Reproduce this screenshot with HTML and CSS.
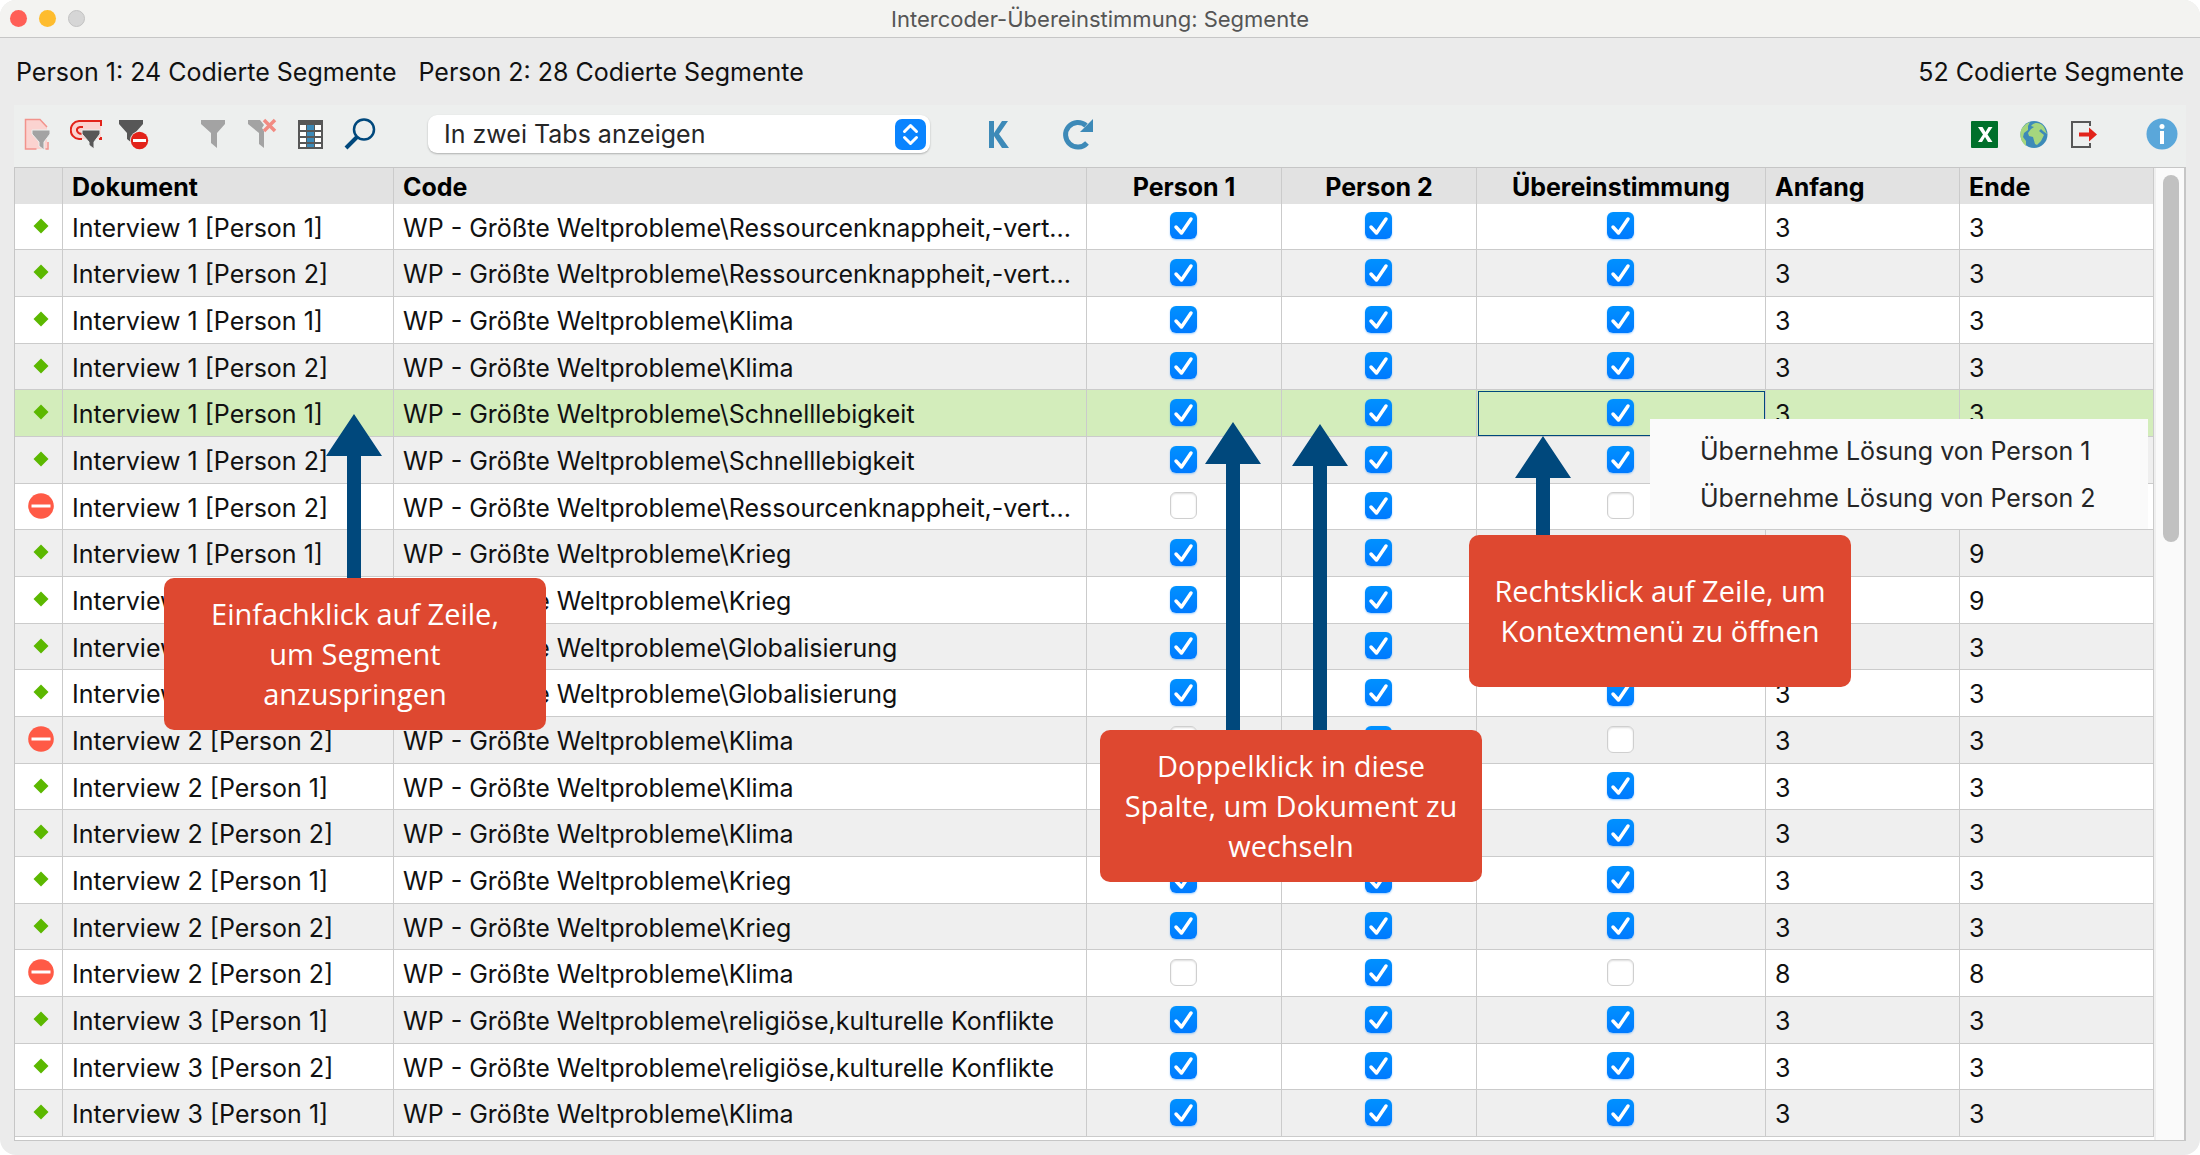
FILE: index.html
```html
<!DOCTYPE html>
<html lang="de">
<head>
<meta charset="utf-8">
<title>Intercoder-Übereinstimmung: Segmente</title>
<link rel="stylesheet" href="styles.css">
</head>
<body>
<svg class="defs" aria-hidden="true">
  <symbol id="ok" viewBox="0 0 28 28"><path d="M14 6.500l7.500 7.500l-7.500 7.500l-7.500-7.500z" fill="#5cb800"/></symbol>
  <symbol id="no" viewBox="0 0 28 28"><circle cx="14" cy="14" r="12.800" fill="#ff5a46"/><path d="M4.500 12.500h19v3h-19z" fill="#fff"/></symbol>
</svg>
<main class="window">
  <header class="titlebar">
    <div class="lights"><button class="light close" aria-label="Schließen"></button><button class="light minimize" aria-label="Minimieren"></button><button class="light zoom" aria-label="Zoomen" disabled></button></div>
    <h1>Intercoder-Übereinstimmung: Segmente</h1>
  </header>
  <div class="summary">
    <span>Person 1: 24 Codierte Segmente</span>
    <span>Person 2: 28 Codierte Segmente</span>
    <span class="total">52 Codierte Segmente</span>
  </div>
  <div class="panel">
    <div class="toolbar">
      <div class="group sources">
        <button aria-label="Dokumente filtern"><svg viewBox="0 0 32 32"><path d="M3.500 1.500h14.500l7 7.500v22h-21.500z" fill="#fbd3d0"/><path d="M25 9l-7-7.500h-14.500v29.500h11M23.500 31h2.500v-7" fill="none" stroke="#f2938c" stroke-width="1.500"/><path d="M10 12h18v4l-6 8v8l-5-4v-4l-7-8z" fill="#a3a3a3" stroke="#edefee"/></svg></button>
        <button aria-label="Codes filtern"><svg viewBox="0 0 32 32"><path d="M31 3H9C-2 4-2 20 9 21h22z" fill="#fbd3d0"/><path d="M31 8V3H9C-2 4-2 20 9 21h3M31 19v2h-2M13 15c-5 3-9-5-3-6h3" fill="none" stroke="#e2231a" stroke-width="2"/><path d="M12 12h18v4l-6 8v7l-5-4v-3l-7-8z" fill="#575757" stroke="#edefee"/></svg></button>
        <button aria-label="Nicht-Übereinstimmungen"><svg viewBox="0 0 32 32"><path d="M1 2h24v4l-8 9-3 5v5l-5-4v-6l-8-9z" fill="#575757"/><circle cx="21.500" cy="22.500" r="9.500" fill="#edefee"/><circle cx="21.500" cy="22.500" r="8.700" fill="#e2231a"/><path d="M15 21h13v3h-13z" fill="#fff"/></svg></button>
      </div>
      <div class="group filters">
        <button aria-label="Filter"><svg viewBox="0 0 32 32"><path d="M4 2h24v4l-8 9v15l-6-5v-10l-10-9z" fill="#a3a3a3"/></svg></button>
        <button aria-label="Filter zurücksetzen"><svg viewBox="0 0 32 32"><path d="M2 2h12l4 5-2 3 2 3v17l-5-4v-11l-11-9z" fill="#a3a3a3"/><path d="M18 2l11 11M29 2l-11 11" stroke="#f28b82" stroke-width="3.500"/></svg></button>
        <button aria-label="Spalten auswählen"><svg viewBox="0 0 32 32"><path d="M3 2h25v29h-25z" fill="#575757"/><path d="M5 7h6v5h-6zM5 14h6v4h-6zM5 20h6v4h-6zM5 26h6v3h-6zM20 7h6v5h-6zM20 14h6v4h-6zM20 20h6v4h-6zM20 26h6v3h-6z" fill="#fff"/><path d="M12 7h7v5h-7zM12 14h7v4h-7zM12 20h7v4h-7zM12 26h7v3h-7z" fill="#3d8ab8"/></svg></button>
        <button aria-label="Suchen"><svg viewBox="0 0 32 32"><circle cx="20" cy="11.500" r="10" fill="none" stroke="#00487c" stroke-width="2.500"/><path d="M13 19l-11 11" stroke="#00487c" stroke-width="4"/></svg></button>
      </div>
      <label class="picker"><select aria-label="Anzeige"><option>In zwei Tabs anzeigen</option></select><svg viewBox="0 0 31 31" aria-hidden="true"><rect width="31" height="31" rx="7" fill="#0a84ff"/><path d="M9.500 12.500l6-6 6 6M9.500 18.500l6 6 6-6" fill="none" stroke="#fff" stroke-width="3" stroke-linecap="round" stroke-linejoin="round"/></svg></label>
      <div class="group spaced">
        <button aria-label="Kappa"><svg viewBox="0 0 32 32"><path d="M7 3h5v12l8-12h6l-9 13 10 14h-7l-8-12v12h-5z" fill="#3d8ab8"/></svg></button>
        <button aria-label="Aktualisieren"><svg viewBox="0 0 32 32"><path d="M24 7.500A12.300 12.300 0 1 0 25 25" fill="none" stroke="#3d8ab8" stroke-width="5"/><path d="M31 1v13h-13z" fill="#3d8ab8"/></svg></button>
      </div>
      <div class="group export">
        <button aria-label="Excel-Export"><svg viewBox="0 0 32 32"><rect x="2" y="3" width="27" height="27" rx="1" fill="#00702b"/><path d="M9 9h4.500l3 5 3-5h4l-5 7.500 5 7.500h-4.500l-3-5-3 5h-4l5-7.500z" fill="#fff"/></svg></button>
        <button aria-label="HTML-Export"><svg viewBox="0 0 32 32"><circle cx="16" cy="16.500" r="13.500" fill="#3d8ab8"/><path d="M4 10l4-4 4-2-2 4 0 4-4 3-1 4 3 4v5c-6-5-7-12-4-18zM13 8c4-5 10-3 13 1l3 7-4-3-2-2-2 2 5 4-3 6-4 4-2-1-2-7-4-1-1-3 3-4 3-2z" fill="#a5d67e"/></svg></button>
        <button aria-label="Exportieren"><svg viewBox="0 0 32 32"><path d="M23 8V4H5v25h18v-4" fill="none" stroke="#575757" stroke-width="2"/><path d="M12 14.500h10v-5l8 7-8 7v-5h-10z" fill="#e2231a"/></svg></button>
      </div>
      <div class="group">
        <button aria-label="Info"><svg viewBox="0 0 32 32"><circle cx="16" cy="16" r="15.500" fill="#5aa7da"/><circle cx="16" cy="8.500" r="2.500" fill="#fff"/><path d="M14 13h4v13h-4z" fill="#fff"/></svg></button>
      </div>
    </div>
    <div class="grid">
      <div class="rows">
        <table>
          <colgroup><col class="c-status"><col class="c-doc"><col><col class="c-person"><col class="c-person"><col class="c-match"><col class="c-num"><col class="c-num"></colgroup>
          <thead><tr><th></th><th>Dokument</th><th>Code</th><th class="mid">Person 1</th><th class="mid">Person 2</th><th class="mid">Übereinstimmung</th><th>Anfang</th><th>Ende</th></tr></thead>
          <tbody>
            <tr><td><svg><use href="#ok"/></svg></td><td>Interview 1 [Person 1]</td><td>WP - Größte Weltprobleme\Ressourcenknappheit,-vert...</td><td class="check"><input type="checkbox" aria-label="Person 1" checked></td><td class="check"><input type="checkbox" aria-label="Person 2" checked></td><td class="check"><input type="checkbox" aria-label="Übereinstimmung" checked></td><td>3</td><td>3</td></tr>
            <tr><td><svg><use href="#ok"/></svg></td><td>Interview 1 [Person 2]</td><td>WP - Größte Weltprobleme\Ressourcenknappheit,-vert...</td><td class="check"><input type="checkbox" aria-label="Person 1" checked></td><td class="check"><input type="checkbox" aria-label="Person 2" checked></td><td class="check"><input type="checkbox" aria-label="Übereinstimmung" checked></td><td>3</td><td>3</td></tr>
            <tr><td><svg><use href="#ok"/></svg></td><td>Interview 1 [Person 1]</td><td>WP - Größte Weltprobleme\Klima</td><td class="check"><input type="checkbox" aria-label="Person 1" checked></td><td class="check"><input type="checkbox" aria-label="Person 2" checked></td><td class="check"><input type="checkbox" aria-label="Übereinstimmung" checked></td><td>3</td><td>3</td></tr>
            <tr><td><svg><use href="#ok"/></svg></td><td>Interview 1 [Person 2]</td><td>WP - Größte Weltprobleme\Klima</td><td class="check"><input type="checkbox" aria-label="Person 1" checked></td><td class="check"><input type="checkbox" aria-label="Person 2" checked></td><td class="check"><input type="checkbox" aria-label="Übereinstimmung" checked></td><td>3</td><td>3</td></tr>
            <tr class="selected"><td><svg><use href="#ok"/></svg></td><td>Interview 1 [Person 1]</td><td>WP - Größte Weltprobleme\Schnelllebigkeit</td><td class="check"><input type="checkbox" aria-label="Person 1" checked></td><td class="check"><input type="checkbox" aria-label="Person 2" checked></td><td class="check focused"><input type="checkbox" aria-label="Übereinstimmung" checked></td><td>3</td><td>3</td></tr>
            <tr><td><svg><use href="#ok"/></svg></td><td>Interview 1 [Person 2]</td><td>WP - Größte Weltprobleme\Schnelllebigkeit</td><td class="check"><input type="checkbox" aria-label="Person 1" checked></td><td class="check"><input type="checkbox" aria-label="Person 2" checked></td><td class="check"><input type="checkbox" aria-label="Übereinstimmung" checked></td><td>3</td><td>3</td></tr>
            <tr><td><svg><use href="#no"/></svg></td><td>Interview 1 [Person 2]</td><td>WP - Größte Weltprobleme\Ressourcenknappheit,-vert...</td><td class="check"><input type="checkbox" aria-label="Person 1"></td><td class="check"><input type="checkbox" aria-label="Person 2" checked></td><td class="check"><input type="checkbox" aria-label="Übereinstimmung"></td><td>3</td><td>3</td></tr>
            <tr><td><svg><use href="#ok"/></svg></td><td>Interview 1 [Person 1]</td><td>WP - Größte Weltprobleme\Krieg</td><td class="check"><input type="checkbox" aria-label="Person 1" checked></td><td class="check"><input type="checkbox" aria-label="Person 2" checked></td><td class="check"><input type="checkbox" aria-label="Übereinstimmung" checked></td><td>9</td><td>9</td></tr>
            <tr><td><svg><use href="#ok"/></svg></td><td>Interview 1 [Person 2]</td><td>WP - Größte Weltprobleme\Krieg</td><td class="check"><input type="checkbox" aria-label="Person 1" checked></td><td class="check"><input type="checkbox" aria-label="Person 2" checked></td><td class="check"><input type="checkbox" aria-label="Übereinstimmung" checked></td><td>9</td><td>9</td></tr>
            <tr><td><svg><use href="#ok"/></svg></td><td>Interview 2 [Person 1]</td><td>WP - Größte Weltprobleme\Globalisierung</td><td class="check"><input type="checkbox" aria-label="Person 1" checked></td><td class="check"><input type="checkbox" aria-label="Person 2" checked></td><td class="check"><input type="checkbox" aria-label="Übereinstimmung" checked></td><td>3</td><td>3</td></tr>
            <tr><td><svg><use href="#ok"/></svg></td><td>Interview 2 [Person 2]</td><td>WP - Größte Weltprobleme\Globalisierung</td><td class="check"><input type="checkbox" aria-label="Person 1" checked></td><td class="check"><input type="checkbox" aria-label="Person 2" checked></td><td class="check"><input type="checkbox" aria-label="Übereinstimmung" checked></td><td>3</td><td>3</td></tr>
            <tr><td><svg><use href="#no"/></svg></td><td>Interview 2 [Person 2]</td><td>WP - Größte Weltprobleme\Klima</td><td class="check"><input type="checkbox" aria-label="Person 1"></td><td class="check"><input type="checkbox" aria-label="Person 2" checked></td><td class="check"><input type="checkbox" aria-label="Übereinstimmung"></td><td>3</td><td>3</td></tr>
            <tr><td><svg><use href="#ok"/></svg></td><td>Interview 2 [Person 1]</td><td>WP - Größte Weltprobleme\Klima</td><td class="check"><input type="checkbox" aria-label="Person 1" checked></td><td class="check"><input type="checkbox" aria-label="Person 2" checked></td><td class="check"><input type="checkbox" aria-label="Übereinstimmung" checked></td><td>3</td><td>3</td></tr>
            <tr><td><svg><use href="#ok"/></svg></td><td>Interview 2 [Person 2]</td><td>WP - Größte Weltprobleme\Klima</td><td class="check"><input type="checkbox" aria-label="Person 1" checked></td><td class="check"><input type="checkbox" aria-label="Person 2" checked></td><td class="check"><input type="checkbox" aria-label="Übereinstimmung" checked></td><td>3</td><td>3</td></tr>
            <tr><td><svg><use href="#ok"/></svg></td><td>Interview 2 [Person 1]</td><td>WP - Größte Weltprobleme\Krieg</td><td class="check"><input type="checkbox" aria-label="Person 1" checked></td><td class="check"><input type="checkbox" aria-label="Person 2" checked></td><td class="check"><input type="checkbox" aria-label="Übereinstimmung" checked></td><td>3</td><td>3</td></tr>
            <tr><td><svg><use href="#ok"/></svg></td><td>Interview 2 [Person 2]</td><td>WP - Größte Weltprobleme\Krieg</td><td class="check"><input type="checkbox" aria-label="Person 1" checked></td><td class="check"><input type="checkbox" aria-label="Person 2" checked></td><td class="check"><input type="checkbox" aria-label="Übereinstimmung" checked></td><td>3</td><td>3</td></tr>
            <tr><td><svg><use href="#no"/></svg></td><td>Interview 2 [Person 2]</td><td>WP - Größte Weltprobleme\Klima</td><td class="check"><input type="checkbox" aria-label="Person 1"></td><td class="check"><input type="checkbox" aria-label="Person 2" checked></td><td class="check"><input type="checkbox" aria-label="Übereinstimmung"></td><td>8</td><td>8</td></tr>
            <tr><td><svg><use href="#ok"/></svg></td><td>Interview 3 [Person 1]</td><td>WP - Größte Weltprobleme\religiöse,kulturelle Konflikte</td><td class="check"><input type="checkbox" aria-label="Person 1" checked></td><td class="check"><input type="checkbox" aria-label="Person 2" checked></td><td class="check"><input type="checkbox" aria-label="Übereinstimmung" checked></td><td>3</td><td>3</td></tr>
            <tr><td><svg><use href="#ok"/></svg></td><td>Interview 3 [Person 2]</td><td>WP - Größte Weltprobleme\religiöse,kulturelle Konflikte</td><td class="check"><input type="checkbox" aria-label="Person 1" checked></td><td class="check"><input type="checkbox" aria-label="Person 2" checked></td><td class="check"><input type="checkbox" aria-label="Übereinstimmung" checked></td><td>3</td><td>3</td></tr>
            <tr><td><svg><use href="#ok"/></svg></td><td>Interview 3 [Person 1]</td><td>WP - Größte Weltprobleme\Klima</td><td class="check"><input type="checkbox" aria-label="Person 1" checked></td><td class="check"><input type="checkbox" aria-label="Person 2" checked></td><td class="check"><input type="checkbox" aria-label="Übereinstimmung" checked></td><td>3</td><td>3</td></tr>
          </tbody>
        </table>
      </div>
      <div class="scrollbar"><div class="thumb"></div></div>
      <div class="menu" role="menu"><button role="menuitem">Übernehme Lösung von Person 1</button><button role="menuitem">Übernehme Lösung von Person 2</button></div>
      <div class="arrow arrow-row"></div>
      <div class="arrow arrow-p1"></div>
      <div class="arrow arrow-p2"></div>
      <div class="arrow arrow-menu"></div>
      <p class="callout callout-row">Einfachklick auf Zeile,<br>um Segment<br>anzuspringen</p>
      <p class="callout callout-persons">Doppelklick in diese<br>Spalte, um Dokument zu<br>wechseln</p>
      <p class="callout callout-menu">Rechtsklick auf Zeile, um<br>Kontextmenü zu öffnen</p>
    </div>
  </div>
</main>
</body>
</html>
```
FILE: styles.css
```css
* { box-sizing: border-box; }
body { margin: 0; background: #fff; color: #111; font-family: Inter, "Liberation Sans", sans-serif; font-size: 25px; line-height: 32px; }
button { border: 0; padding: 0; background: none; font: inherit; color: inherit; }
.defs { position: absolute; width: 0; height: 0; }
.window { display: flex; flex-direction: column; height: 100vh; min-height: 600px; background: #ebebeb; border-radius: 16px; overflow: hidden; }

.titlebar { display: grid; grid-template-columns: 1fr auto 1fr; align-items: center; height: 38px; padding: 0 10px; background: #f3f3f1; border-bottom: 1px solid #c6c6c6; flex: none; }
.titlebar h1 { margin: 0; font-size: 22px; font-weight: 400; color: #555; }
.lights { display: flex; gap: 12px; }
.light { width: 17px; height: 17px; border-radius: 50%; }
.close { background: #ff5f57; }
.minimize { background: #febc2e; }
.zoom { background: #d6d6d6; border: 1px solid #c2c2c2; }

.summary { display: flex; gap: 22px; align-items: center; height: 67px; padding: 0 16px; flex: none; }
.total { margin-left: auto; }

.panel { flex: 1; min-height: 0; display: flex; flex-direction: column; margin: 0 14px 14px; }
.toolbar { display: flex; align-items: center; height: 62px; padding-bottom: 4px; background: #edefee; flex: none; }
.group { display: flex; margin-right: 30px; }
.group:last-child { margin-right: 0; }
.group button { display: flex; justify-content: center; width: 49px; height: 32px; }
.sources button { width: 48px; }
.group svg { width: 32px; height: 32px; }
.filters { margin-right: 44px; }
.spaced { gap: 31px; }
.export { margin-left: auto; }
.picker { position: relative; display: block; width: 502px; height: 38px; margin-right: 43px; }
.picker select { appearance: none; width: 100%; height: 100%; padding: 0 16px; border: 0; border-radius: 9px; background: #fff; box-shadow: 0 1px 2px #0004; font: inherit; color: #262626; }
.picker svg { position: absolute; top: 4px; right: 4px; width: 31px; height: 31px; pointer-events: none; }

.grid { position: relative; flex: 1; min-height: 0; display: flex; border: 1px solid #c6c6c6; border-right-width: 2px; background: #fff; }
.rows { flex: 1; overflow: hidden; }
table { width: 100%; table-layout: fixed; border-collapse: separate; border-spacing: 0; }
.c-status { width: 48px; }
.c-doc { width: 331px; }
.c-person { width: 195px; }
.c-match { width: 289px; }
.c-num { width: 194px; }
th, td { padding: 2px 9px 0; border-right: 1px solid #cbcbcb; text-align: left; white-space: nowrap; overflow: hidden; }
th { height: 36px; background: #e2e2e2; font-weight: 700; color: #000; }
.mid { text-align: center; }
tbody tr { height: 47px; }
tbody tr:nth-child(3n+1) { height: 46px; }
tbody tr:nth-child(even) { background: #efefef; }
tbody tr.selected { background: #d3edbb; }
td { border-bottom: 1px solid #cbcbcb; }
td:first-child { padding: 0 0 2px 4px; }
td svg { display: block; width: 28px; height: 28px; margin: 0 auto; }
.check { padding: 0 11px 2px 9px; }
.focused { outline: 1px solid #00487c; outline-offset: -2px; }
input[type="checkbox"] { appearance: none; display: block; width: 27px; height: 27px; margin: 0 auto; border: 1px solid #cfcfcf; border-radius: 6px; background: #fff; box-shadow: inset 0 1px 2px #0002; }
input[type="checkbox"]:checked { border: 0; background: url("data:image/svg+xml,%3Csvg xmlns='http://www.w3.org/2000/svg' viewBox='0 0 27 27'%3E%3Cpath d='M6 15l5.500 6L21 7' fill='none' stroke='white' stroke-width='3.500' stroke-linecap='round' stroke-linejoin='round'/%3E%3C/svg%3E"), linear-gradient(#0091ff, #007aff); box-shadow: 0 1px 2px #0a84ff66; }

.scrollbar { width: 30px; padding: 7px 5px 0 7px; background: #fafafa; border-left: 2px solid #efefef; }
.thumb { width: 16px; height: 367px; border-radius: 8px; background: #c1c1c1; }

.menu { position: absolute; left: 1635px; top: 251px; width: 498px; padding: 8px 0; display: flex; flex-direction: column; background: #fafafa; color: #262626; }
.menu button { height: 47px; padding-left: 50px; text-align: left; }

.arrow { position: absolute; width: 56px; background: #00487c; clip-path: polygon(28px 0, 100% 42px, 35px 42px, 35px 100%, 21px 100%, 21px 42px, 0 42px); }
.arrow-row { left: 311px; top: 246px; height: 166px; }
.arrow-p1 { left: 1190px; top: 254px; height: 310px; }
.arrow-p2 { left: 1277px; top: 256px; height: 308px; }
.arrow-menu { left: 1500px; top: 268px; height: 101px; }
.callout { position: absolute; display: grid; place-content: center; width: 382px; height: 152px; margin: 0; border-radius: 10px; background: #de4830; color: #fff; font-family: "Open Sans", "Noto Sans", sans-serif; font-size: 29px; line-height: 40px; text-align: center; }
.callout-row { left: 149px; top: 410px; }
.callout-persons { left: 1085px; top: 562px; }
.callout-menu { left: 1454px; top: 367px; }
```
